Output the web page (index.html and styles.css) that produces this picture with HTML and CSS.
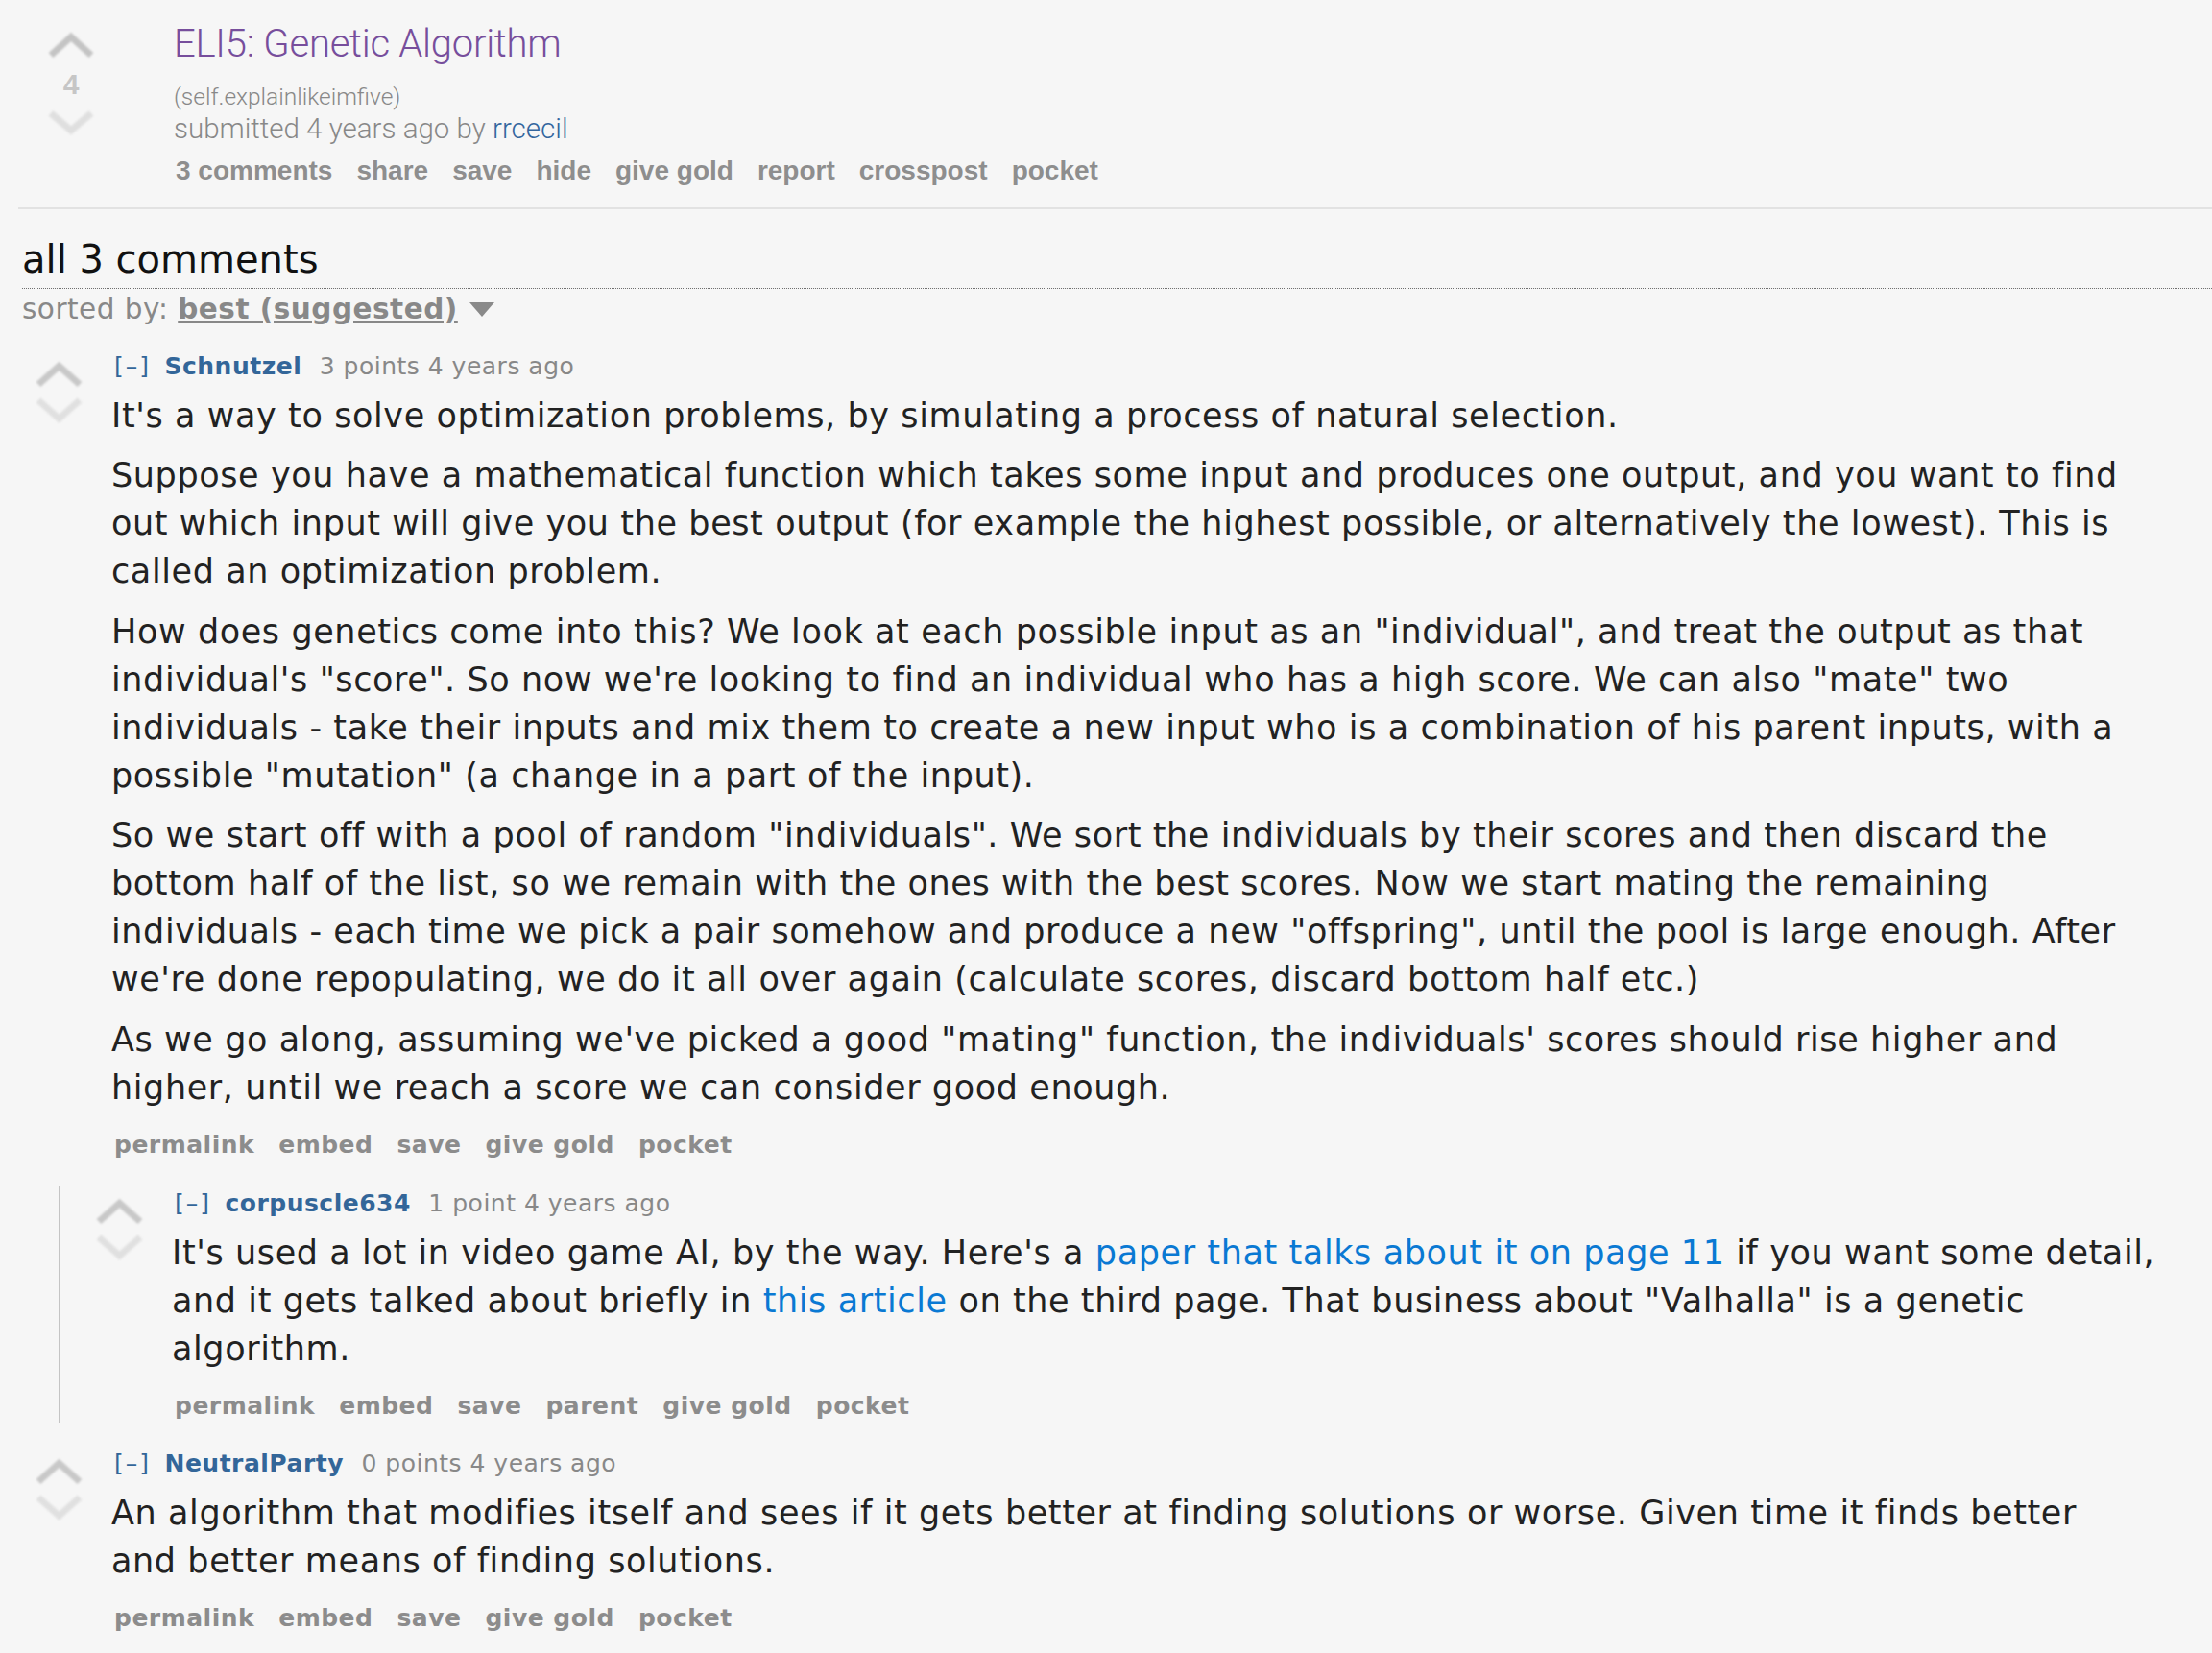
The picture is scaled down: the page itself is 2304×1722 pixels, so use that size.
FILE: index.html
```html
<!DOCTYPE html>
<html lang="en">
<head>
<meta charset="utf-8">
<title>ELI5: Genetic Algorithm</title>
<link rel="stylesheet" href="styles.css">
</head>
<body>
<div class="post">
  <div class="vote">
    <svg class="arrow" width="50" height="28" viewBox="0 0 50 28"><polyline class="up" points="4,24.5 25,5.5 46,24.5"/></svg>
    <div class="score">4</div>
    <svg class="arrow down-gap" width="50" height="26" viewBox="0 0 50 26"><polyline class="down" points="4,3 25,21 46,3"/></svg>
  </div>
  <div class="entry">
    <a class="title">ELI5: Genetic Algorithm</a>
    <div class="domain">(self.explainlikeimfive)</div>
    <div class="tagline">submitted 4 years ago by <a class="op">rrcecil</a></div>
    <ul class="buttons">
      <li><a>3 comments</a></li>
      <li><a>share</a></li>
      <li><a>save</a></li>
      <li><a>hide</a></li>
      <li><a>give gold</a></li>
      <li><a>report</a></li>
      <li><a>crosspost</a></li>
      <li><a>pocket</a></li>
    </ul>
  </div>
</div>
<div class="sep"></div>
<div class="commentarea">
  <div class="panetitle"><span class="pt">all 3 comments</span></div>
  <div class="sort">sorted by: <a class="sel">best (suggested)</a><span class="tri"></span></div>

  <div class="comment">
    <div class="cmain">
      <div class="midcol">
        <svg class="arrow" width="51" height="28" viewBox="0 0 51 28"><polyline class="cup" points="4,24.5 25.5,5.5 47,24.5"/></svg>
        <svg class="arrow cdown-gap" width="51" height="27" viewBox="0 0 51 27"><polyline class="cdown" points="4,3 25.5,22 47,3"/></svg>
      </div>
      <div class="centry">
        <div class="ctag"><a class="expand">[–]</a> <a class="author">Schnutzel</a> <span>3 points</span> <span>4 years ago</span></div>
        <div class="md">
          <p>It's a way to solve optimization problems, by simulating a process of natural selection.</p>
          <p>Suppose you have a mathematical function which takes some input and produces one output, and you want to find out which input will give you the best output (for example the highest possible, or alternatively the lowest). This is called an optimization problem.</p>
          <p>How does genetics come into this? We look at each possible input as an "individual", and treat the output as that individual's "score". So now we're looking to find an individual who has a high score. We can also "mate" two individuals - take their inputs and mix them to create a new input who is a combination of his parent inputs, with a possible "mutation" (a change in a part of the input).</p>
          <p>So we start off with a pool of random "individuals". We sort the individuals by their scores and then discard the bottom half of the list, so we remain with the ones with the best scores. Now we start mating the remaining individuals - each time we pick a pair somehow and produce a new "offspring", until the pool is large enough. After we're done repopulating, we do it all over again (calculate scores, discard bottom half etc.)</p>
          <p>As we go along, assuming we've picked a good "mating" function, the individuals' scores should rise higher and higher, until we reach a score we can consider good enough.</p>
        </div>
        <ul class="cbuttons">
          <li><a>permalink</a></li>
          <li><a>embed</a></li>
          <li><a>save</a></li>
          <li><a>give gold</a></li>
          <li><a>pocket</a></li>
        </ul>
      </div>
    </div>
    <div class="child">
      <div class="comment nested">
        <div class="cmain">
          <div class="midcol">
            <svg class="arrow" width="51" height="28" viewBox="0 0 51 28"><polyline class="cup" points="4,24.5 25.5,5.5 47,24.5"/></svg>
            <svg class="arrow cdown-gap" width="51" height="27" viewBox="0 0 51 27"><polyline class="cdown" points="4,3 25.5,22 47,3"/></svg>
          </div>
          <div class="centry">
            <div class="ctag"><a class="expand">[–]</a> <a class="author">corpuscle634</a> <span>1 point</span> <span>4 years ago</span></div>
            <div class="md">
              <p>It's used a lot in video game AI, by the way. Here's a <a>paper that talks about it on page 11</a> if you want some detail, and it gets talked about briefly in <a>this article</a> on the third page. That business about "Valhalla" is a genetic algorithm.</p>
            </div>
            <ul class="cbuttons">
              <li><a>permalink</a></li>
              <li><a>embed</a></li>
              <li><a>save</a></li>
              <li><a>parent</a></li>
              <li><a>give gold</a></li>
              <li><a>pocket</a></li>
            </ul>
          </div>
        </div>
      </div>
    </div>
  </div>

  <div class="comment">
    <div class="cmain">
      <div class="midcol">
        <svg class="arrow" width="51" height="28" viewBox="0 0 51 28"><polyline class="cup" points="4,24.5 25.5,5.5 47,24.5"/></svg>
        <svg class="arrow cdown-gap" width="51" height="27" viewBox="0 0 51 27"><polyline class="cdown" points="4,3 25.5,22 47,3"/></svg>
      </div>
      <div class="centry">
        <div class="ctag"><a class="expand">[–]</a> <a class="author">NeutralParty</a> <span>0 points</span> <span>4 years ago</span></div>
        <div class="md">
          <p>An algorithm that modifies itself and sees if it gets better at finding solutions or worse. Given time it finds better and better means of finding solutions.</p>
        </div>
        <ul class="cbuttons">
          <li><a>permalink</a></li>
          <li><a>embed</a></li>
          <li><a>save</a></li>
          <li><a>give gold</a></li>
          <li><a>pocket</a></li>
        </ul>
      </div>
    </div>
  </div>
</div>
</body>
</html>
```

FILE: styles.css
```css
html, body {
  margin: 0;
  padding: 0;
  background: #f6f6f6;
}

body {
  font-family: "DejaVu Sans", Verdana, sans-serif;
  color: #222;
}

a {
  text-decoration: none;
  cursor: pointer;
}

/* ---------- post ---------- */
.post {
  display: flex;
  align-items: flex-start;
  padding-left: 49px;
}

.vote {
  width: 50px;
  flex: none;
  display: flex;
  flex-direction: column;
  align-items: center;
  padding-top: 33px;
}

.arrow {
  display: block;
  overflow: visible;
  filter: blur(0.8px);
}

.arrow polyline {
  fill: none;
  stroke-width: 7;
  stroke-linejoin: miter;
  stroke-linecap: butt;
}

.arrow .up { stroke: #c4c4c4; }
.arrow .down { stroke: #dfdfdf; }
.arrow .cup { stroke: #c8c8c8; }
.arrow .cdown { stroke: #e0e0e0; }

.score {
  font: bold 30px/34px "Liberation Sans", Arial, sans-serif;
  color: #c6c6c6;
  margin-top: 9.6px;
}

.down-gap {
  margin-top: 10.4px;
}

.entry {
  margin-left: 82px;
  padding-top: 21px;
  font-family: Roboto, "Liberation Sans", Arial, sans-serif;
}

.title {
  display: block;
  font-weight: 300;
  font-size: 40px;
  line-height: 50px;
  letter-spacing: -0.25px;
  color: #774e9c;
}

.domain {
  margin-top: 15px;
  font-weight: 300;
  font-size: 24.5px;
  line-height: 30px;
  color: #888;
}

.tagline {
  font-weight: 300;
  font-size: 29.5px;
  line-height: 36px;
  color: #888;
}

.tagline .op {
  color: #33669e;
}

.buttons {
  list-style: none;
  margin: 8.7px 0 0 2px;
  padding: 0;
  display: flex;
  gap: 25px;
  font: bold 28px/34px "Liberation Sans", Arial, sans-serif;
}

.buttons a {
  color: #8e8e8e;
}

.sep {
  height: 2px;
  background: #e2e2e2;
  margin: 21.6px 0 0 19px;
}

/* ---------- comments ---------- */
.panetitle {
  margin: 28.2px 0 0 23px;
  padding-bottom: 5.5px;
  border-bottom: 1px dotted #6f6f6f;
}

.pt {
  font-size: 40px;
  line-height: 48px;
  color: #111;
}

.sort {
  margin: 3.7px 0 0 23px;
  font-size: 29.5px;
  line-height: 34px;
  letter-spacing: 0.5px;
  color: #888;
}

.sort .sel {
  font-weight: bold;
  color: #888;
  text-decoration: underline;
}

.tri {
  display: inline-block;
  width: 0;
  height: 0;
  margin: 0 0 2px 12px;
  border-left: 13.5px solid transparent;
  border-right: 13.5px solid transparent;
  border-top: 15px solid #8a8a8a;
}

.comment {
  margin-top: 25px;
}

.comment.nested {
  margin-top: 0;
}

.cmain {
  display: flex;
  align-items: flex-start;
  padding-left: 36px;
}

.midcol {
  width: 51px;
  flex: none;
  margin-right: 29px;
  padding-top: 12px;
}

.cdown-gap {
  margin-top: 10px;
}

.centry {
  flex: 1 1 auto;
  min-width: 0;
}

.ctag {
  padding-left: 3px;
  font-size: 25px;
  line-height: 35px;
  letter-spacing: 0.5px;
  color: #888;
}

.ctag .expand {
  color: #369;
  letter-spacing: 2px;
  margin-right: 6px;
}

.ctag .author {
  color: #369;
  font-weight: bold;
  margin-right: 10px;
}

.md {
  margin-top: 9px;
  max-width: 2108px;
  font-size: 35px;
  line-height: 50px;
  letter-spacing: 0.6px;
  color: #222;
}

.md p {
  margin: 0 0 12.5px;
}

.md p:last-child {
  margin-bottom: 0;
}

.md a {
  color: #0a79d3;
}

.cbuttons {
  list-style: none;
  margin: 17px 0 0;
  padding: 0 0 0 3px;
  display: flex;
  gap: 25px;
  font-weight: bold;
  font-size: 25px;
  line-height: 35px;
  letter-spacing: 0.5px;
}

.cbuttons a {
  color: #8c8c8c;
}

.child {
  margin: 26px 0 0 61px;
  border-left: 2px solid #c4c4c4;
}
```
